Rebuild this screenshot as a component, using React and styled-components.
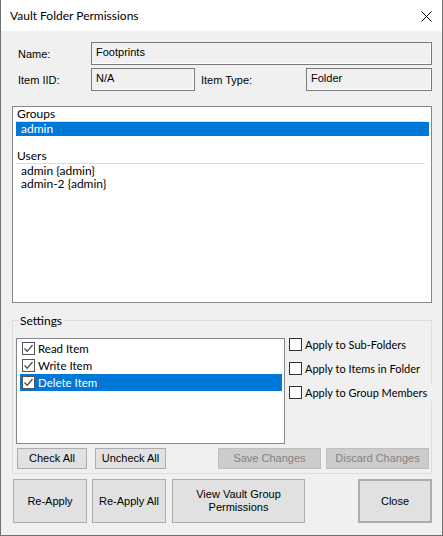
import React from 'react';
import styled, { createGlobalStyle } from 'styled-components';

const GlobalStyle = createGlobalStyle`
  html, body {
    margin: 0;
    padding: 0;
    background: #ffffff;
  }
  * {
    box-sizing: border-box;
  }
`

const uiFont = `Lato, "Noto Sans", sans-serif`

const Window = styled.div`
  width: 443px;
  height: 536px;
  border: 1px solid #707070;
  border-top: none;
  background: #f0f0f0;
  display: flex;
  flex-direction: column;
  font-family: "Liberation Sans", Arial, sans-serif;
  font-size: 11px;
  color: #000;
`
const TitleBar = styled.div`
  height: 31px;
  flex-shrink: 0;
  background: #ffffff;
  display: flex;
  align-items: center;
  justify-content: space-between;
  padding: 0 10px 0 9px;
  font-family: ${uiFont};
  font-size: 12px;
`
const CloseX = styled.svg`
  width: 11px;
  height: 11px;
  margin-top: 1px;
`
const Body = styled.div`
  flex: 1;
  display: flex;
  flex-direction: column;
  padding: 11px 10px 12px 11px;
`
const InfoRow = styled.div`
  display: flex;
  align-items: center;
  height: 23px;
  & + & {
    margin-top: 3px;
  }
`
const Label = styled.div`
  width: ${p => p.$w}px;
  padding-left: ${p => p.$pad || 0}px;
  margin-left: ${p => p.$ml || 0}px;
  flex-shrink: 0;
  padding-top: 1px;
`
const Field = styled.div`
  height: 23px;
  width: ${p => (p.$w ? `${p.$w}px` : 'auto')};
  flex: ${p => (p.$w ? '0 0 auto' : '1')};
  border: 1px solid #7a7a7a;
  box-shadow: inset -1px -1px 0 #ffffff;
  background: #f0f0f0;
  padding: 3px 4px;
`
const ListView = styled.div`
  margin-top: 15px;
  height: 197px;
  background: #ffffff;
  border: 1px solid #828790;
  padding: 0 2px 0 3px;
  font-family: ${uiFont};
  font-size: 12px;
`
const GroupHeader = styled.div`
  height: 15px;
  line-height: 14px;
  padding-left: 1px;
  margin-right: 4px;
  margin-top: ${p => p.$mt || 0}px;
  border-bottom: 1px solid #dcdcdc;
`
const ListRow = styled.div`
  height: ${p => p.$h || 14}px;
  line-height: 14px;
  padding-left: 5px;
  background: ${p => (p.$selected ? '#0078d7' : 'transparent')};
  color: ${p => (p.$selected ? '#ffffff' : '#000000')};
`
const GroupBox = styled.fieldset`
  margin: 11px 0 0 0;
  padding: 11px 0 4px 3px;
  border: 1px solid #dcdcdc;
  min-width: 0;
`
const Legend = styled.legend`
  padding: 0 2px;
  margin-left: 2px;
  line-height: 13px;
  font-family: ${uiFont};
  font-size: 12px;
`
const SettingsTop = styled.div`
  display: flex;
  align-items: flex-start;
`
const CheckList = styled.div`
  width: 269px;
  height: 106px;
  flex-shrink: 0;
  background: #ffffff;
  border: 1px solid #828790;
  padding: 1px 2px 0 3px;
  font-family: ${uiFont};
  font-size: 11.5px;
`
const CheckRow = styled.div`
  height: 17px;
  display: flex;
  align-items: center;
  gap: 3px;
  padding-left: 2px;
  background: ${p => (p.$selected ? '#0078d7' : 'transparent')};
  color: ${p => (p.$selected ? '#ffffff' : '#000000')};
`
const Box = styled.span`
  width: 13px;
  height: 13px;
  flex-shrink: 0;
  border: 1px solid ${p => (p.$dark ? '#333333' : '#555555')};
  background: #ffffff;
  display: flex;
  align-items: center;
  justify-content: center;
`
const ApplyCol = styled.div`
  margin: -2px 0 0 4px;
  display: flex;
  flex-direction: column;
  gap: 7px;
  font-family: ${uiFont};
  font-size: 11px;
`
const ApplyOption = styled.label`
  height: 17px;
  display: flex;
  align-items: center;
  gap: 3px;
  white-space: nowrap;
  width: ${p => (p.$cover ? '145px' : 'auto')};
  background: ${p => (p.$cover ? '#f0f0f0' : 'transparent')};
  position: relative;
`
const ButtonRow = styled.div`
  display: flex;
  margin-top: ${p => p.$mt}px;
`
const Button = styled.button`
  width: ${p => p.$w}px;
  height: ${p => p.$h}px;
  margin-left: ${p => (p.$auto ? 'auto' : `${p.$ml || 0}px`)};
  flex-shrink: 0;
  padding: 0 2px;
  background: ${p => (p.disabled ? '#cccccc' : '#e1e1e1')};
  border: ${p => (p.$default ? '2px solid #adadad' : `1px solid ${p.disabled ? '#bfbfbf' : '#adadad'}`)};
  color: ${p => (p.disabled ? '#838383' : '#000000')};
  font-family: "Liberation Sans", Arial, sans-serif;
  font-size: 11px;
  line-height: 13px;
  border-radius: 0;
`

function Tick({ color }) {
  return (
    <svg width="11" height="11" viewBox="0 0 11 11">
      <path d="M1.5 5.5 L4.2 8.3 L9.5 2" fill="none" stroke={color} strokeWidth="1.3" />
    </svg>
  );
}

const permissions = [
  { name: 'Read Item' },
  { name: 'Write Item' },
  { name: 'Delete Item', selected: true },
];

const applyOptions = ['Apply to Sub-Folders', 'Apply to Items in Folder', 'Apply to Group Members'];

function App() {
  return (
    <Window>
      <GlobalStyle />
      <TitleBar>
        <span>Vault Folder Permissions</span>
        <CloseX viewBox="0 0 11 11">
          <path d="M0.5 0.5 L10.5 10.5 M10.5 0.5 L0.5 10.5" stroke="#000" strokeWidth="1" />
        </CloseX>
      </TitleBar>
      <Body>
        <InfoRow>
          <Label $w={79} $pad={6}>Name:</Label>
          <Field>Footprints</Field>
        </InfoRow>
        <InfoRow>
          <Label $w={79} $pad={6}>Item IID:</Label>
          <Field $w={104}>N/A</Field>
          <Label $w={105} $ml={6}>Item Type:</Label>
          <Field>Folder</Field>
        </InfoRow>

        <ListView>
          <GroupHeader>Groups</GroupHeader>
          <ListRow $selected>admin</ListRow>
          <GroupHeader $mt={13}>Users</GroupHeader>
          <ListRow $h={13}>admin {'{admin}'}</ListRow>
          <ListRow $h={13}>admin-2 {'{admin}'}</ListRow>
        </ListView>

        <GroupBox>
          <Legend>Settings</Legend>
          <SettingsTop>
            <CheckList>
              {permissions.map(p => (
                <CheckRow key={p.name} $selected={p.selected}>
                  <Box>
                    <Tick color="#4d4d4d" />
                  </Box>
                  {p.name}
                </CheckRow>
              ))}
            </CheckList>
            <ApplyCol>
              {applyOptions.map((o, i) => (
                <ApplyOption key={o} $cover={i === applyOptions.length - 1}>
                  <Box $dark />
                  {o}
                </ApplyOption>
              ))}
            </ApplyCol>
          </SettingsTop>
          <ButtonRow $mt={4}>
            <Button $w={70} $h={21} $ml={1}>Check All</Button>
            <Button $w={71} $h={21} $ml={8}>Uncheck All</Button>
            <Button $w={103} $h={21} $ml={52} disabled>Save Changes</Button>
            <Button $w={103} $h={21} $ml={5} disabled>Discard Changes</Button>
          </ButtonRow>
        </GroupBox>

        <ButtonRow $mt={5}>
          <Button $w={74} $h={44} $ml={1}>Re-Apply</Button>
          <Button $w={74} $h={44} $ml={5}>Re-Apply All</Button>
          <Button $w={133} $h={44} $ml={6}>View Vault Group<br />Permissions</Button>
          <Button $w={74} $h={44} $auto $default>Close</Button>
        </ButtonRow>
      </Body>
    </Window>
  );
}

export default App;
